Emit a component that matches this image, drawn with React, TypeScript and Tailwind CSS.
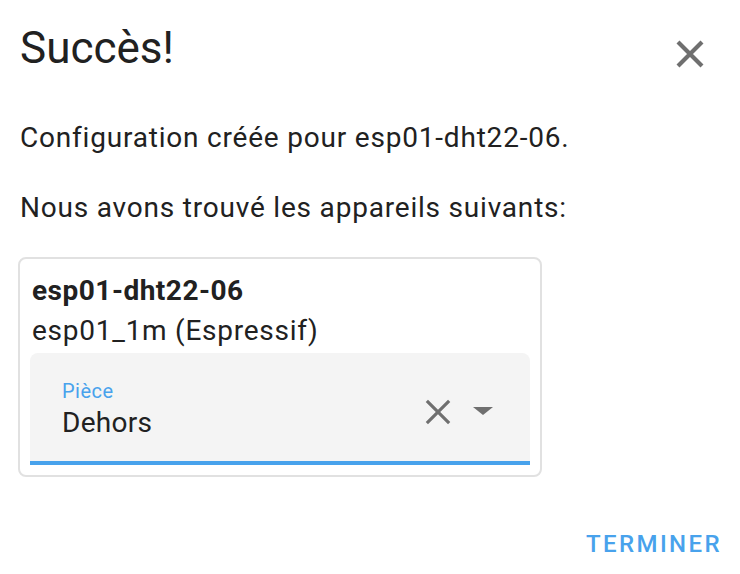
import React from 'react';

const blue = 'text-[#48a2ec]';

export default function App() {
  return (
    <div className="h-[574px] w-[740px] bg-white font-['Roboto',sans-serif] text-[#212121]">
      <div className="flex items-start justify-between pl-[20px] pr-[36px] pt-[22px]">
        <h1 className="text-[44px] font-normal leading-[52px]">Succès!</h1>
        <button className="mt-[18px] text-[#6f6f6f]">
          <svg width="28" height="28" viewBox="0 0 14 14">
            <path d="M1 1L13 13M13 1L1 13" stroke="currentColor" strokeWidth="2.1" />
          </svg>
        </button>
      </div>

      <div className="px-[20px] pt-[46px] text-[28px] leading-[36px] tracking-[0.8px]">
        <p>Configuration créée pour esp01-dht22-06.</p>
        <p className="mt-[34px]">Nous avons trouvé les appareils suivants:</p>
      </div>

      <div className="ml-[18px] mt-[31px] w-[524px] rounded-[8px] border-2 border-[#e1e1e1] px-[10px] pb-[10px] pt-[12px]">
        <div className="px-[2px] text-[28px] font-bold leading-[40px] tracking-[0.5px]">esp01-dht22-06</div>
        <div className="px-[2px] text-[28px] leading-[40px] tracking-[0.75px]">esp01_1m (Espressif)</div>
        <div className="mt-[2px] flex h-[112px] items-center rounded-t-[8px] border-b-4 border-[#48a2ec] bg-[#f4f4f4] pl-[32px] pr-[37px]">
          <div className="flex-1 self-start pt-[26px]">
            <div className={`text-[20px] leading-[24px] tracking-[0.5px] ${blue}`}>Pièce</div>
            <div className="mt-[3px] text-[28px] leading-[34px] tracking-[0.3px]">Dehors</div>
          </div>
          <svg width="26" height="26" viewBox="0 0 14 14" className="mt-[10px] text-[#6f6f6f]">
            <path d="M1 1L13 13M13 1L1 13" stroke="currentColor" strokeWidth="1.7" />
          </svg>
          <svg width="20" height="10" viewBox="0 0 20 10" className="ml-[22px] mt-[10px] text-[#6f6f6f]">
            <path d="M0 0H20L10 8Z" fill="currentColor" />
          </svg>
        </div>
      </div>

      <div className="flex justify-end pr-[18px] pt-[49px]">
        <button className={`text-[24px] font-medium tracking-[2.4px] ${blue}`}>TERMINER</button>
      </div>
    </div>
  );
}
